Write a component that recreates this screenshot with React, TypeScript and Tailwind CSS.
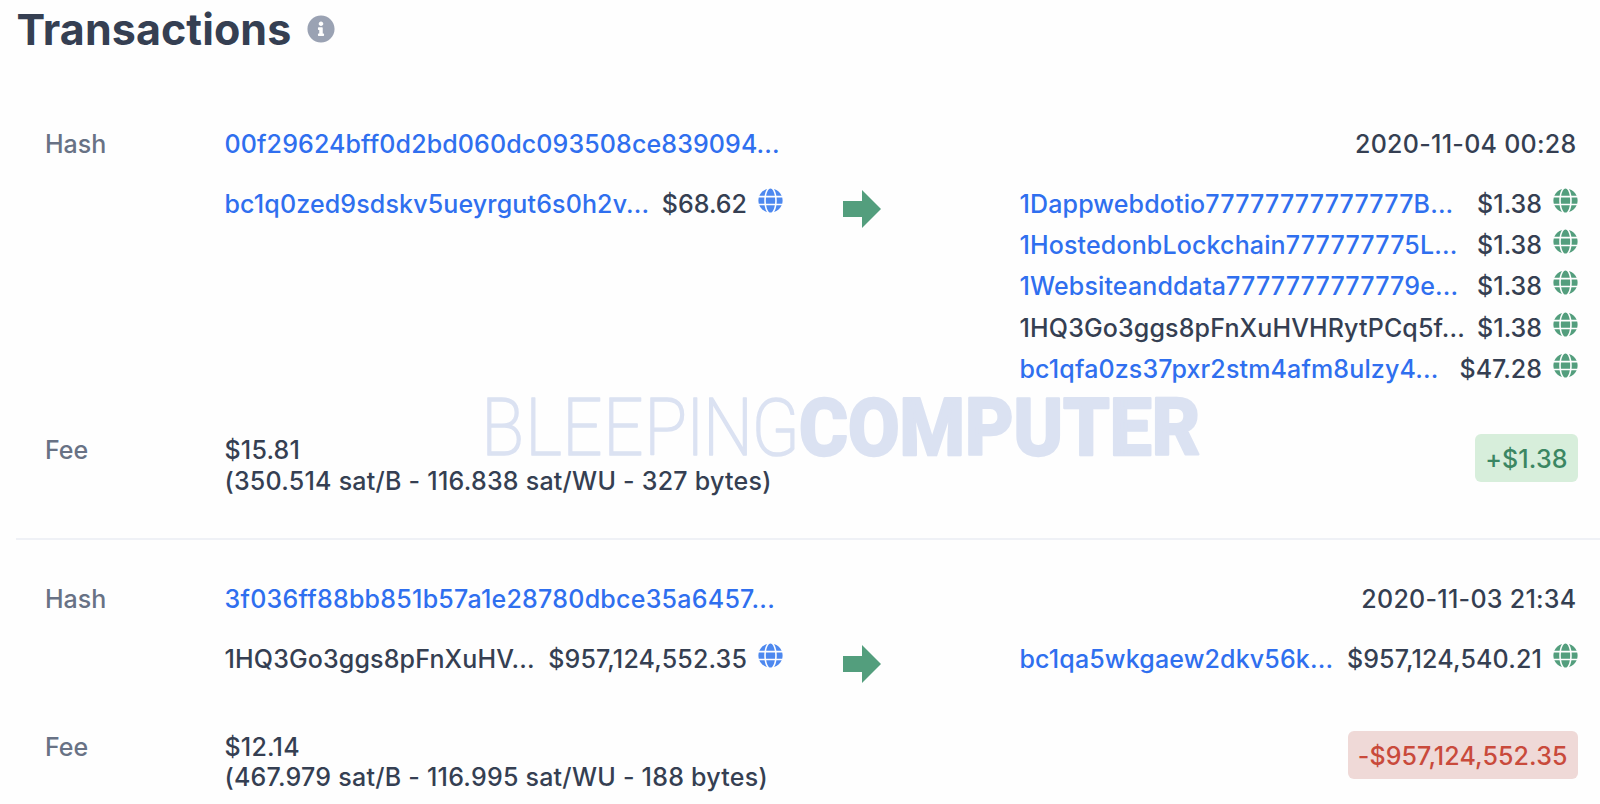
import React from 'react';
import { FaGlobe, FaInfoCircle } from 'react-icons/fa';

interface Entry {
    address: string;
    amount: string;
    link?: boolean;
}

interface Transaction {
    hash: string;
    date: string;
    inputs: Entry[];
    outputs: Entry[];
    fee: string;
    feeDetails: string;
    result: string;
    positive: boolean;
}

const transactions: Transaction[] = [
    {
        hash: '00f29624bff0d2bd060dc093508ce839094...',
        date: '2020-11-04 00:28',
        inputs: [{ address: 'bc1q0zed9sdskv5ueyrgut6s0h2v...', amount: '$68.62', link: true }],
        outputs: [
            { address: '1Dappwebdotio77777777777777B...', amount: '$1.38', link: true },
            { address: '1HostedonbLockchain777777775L...', amount: '$1.38', link: true },
            { address: '1Websiteanddata7777777777779e...', amount: '$1.38', link: true },
            { address: '1HQ3Go3ggs8pFnXuHVHRytPCq5f...', amount: '$1.38' },
            { address: 'bc1qfa0zs37pxr2stm4afm8ulzy4...', amount: '$47.28', link: true },
        ],
        fee: '$15.81',
        feeDetails: '(350.514 sat/B - 116.838 sat/WU - 327 bytes)',
        result: '+$1.38',
        positive: true,
    },
    {
        hash: '3f036ff88bb851b57a1e28780dbce35a6457...',
        date: '2020-11-03 21:34',
        inputs: [{ address: '1HQ3Go3ggs8pFnXuHV...', amount: '$957,124,552.35' }],
        outputs: [{ address: 'bc1qa5wkgaew2dkv56k...', amount: '$957,124,540.21', link: true }],
        fee: '$12.14',
        feeDetails: '(467.979 sat/B - 116.995 sat/WU - 188 bytes)',
        result: '-$957,124,552.35',
        positive: false,
    },
];

const EntryRow: React.FC<{ entry: Entry; iconClass: string }> = ({ entry, iconClass }) => (
    <div className="flex h-[41.3px] items-center whitespace-nowrap">
        <span className={`tracking-[0.14px] ${entry.link ? 'text-[#2f6fef]' : ''}`}>{entry.address}</span>
        <span className={`ml-auto ${entry.amount.length > 6 ? 'tracking-[0.15px]' : ''}`}>{entry.amount}</span>
        <FaGlobe size={25} className={`ml-[10.5px] mb-[9px] shrink-0 ${iconClass}`} />
    </div>
);

const TransactionCard: React.FC<{ tx: Transaction }> = ({ tx }) => (
    <div className="grid grid-cols-[179.5px_558px_237px_558px] pl-[45px]">
        <div className="h-[60px] leading-[41px] text-[#687285]">Hash</div>
        <div className={`leading-[41px] text-[#2f6fef] ${tx.positive ? 'tracking-[0.12px]' : 'tracking-[0.25px]'}`}>
            {tx.hash}
        </div>
        <div />
        <div className="pr-[1px] text-right leading-[41px] tracking-[0.27px]">{tx.date}</div>

        <div />
        <div>
            {tx.inputs.map((entry) => (
                <EntryRow key={entry.address} entry={entry} iconClass="text-[#4d88ef]" />
            ))}
        </div>
        <div className="pl-[60.5px] pt-[6px]">
            <svg width="38" height="38" viewBox="0 0 38 38" fill="#539e7d">
                <path d="M0 11h19V0l19 19-19 19V27H0z" />
            </svg>
        </div>
        <div>
            {tx.outputs.map((entry) => (
                <EntryRow key={entry.address} entry={entry} iconClass="text-[#539e7d]" />
            ))}
        </div>

        <div className={`leading-[30.7px] text-[#687285] ${tx.positive ? 'pt-[45px]' : 'pt-[48.5px]'}`}>Fee</div>
        <div className={`leading-[30.7px] whitespace-nowrap ${tx.positive ? 'pt-[45px]' : 'pt-[48.5px]'}`}>
            <div className="tracking-[0.2px]">{tx.fee}</div>
            <div className="tracking-[0.24px]">{tx.feeDetails}</div>
        </div>
        <div />
        <div className={`text-right ${tx.positive ? 'pt-[44px]' : 'pt-[48px]'}`}>
            <span
                className={`inline-block h-[48px] rounded-md px-[10px] leading-[50px] tracking-[0.1px] ${
                    tx.positive ? 'bg-[#d7eedb] text-[#3b8662]' : 'bg-[#efd9d7] text-[#c94a3b]'
                }`}
            >
                {tx.result}
            </span>
        </div>
    </div>
);

const Watermark: React.FC = () => (
    <svg
        className="pointer-events-none absolute left-[470px] top-[350px]"
        width="760"
        height="140"
        viewBox="470 350 760 140"
        fill="#dbe2f2"
        stroke="#dbe2f2"
        strokeLinejoin="round"
    >
        <text
            transform="scale(0.88 1)"
            x="547 597 639 685.5 732 779.5 799 854"
            y="455.5"
            fontFamily="Roboto"
            fontWeight="200"
            fontSize="80"
            strokeWidth="1.5"
        >
            BLEEPING
        </text>
        <text
            x="799"
            y="455"
            fontFamily="Roboto"
            fontWeight="800"
            fontSize="79"
            strokeWidth="2.5"
            textLength="401"
            lengthAdjust="spacingAndGlyphs"
        >
            COMPUTER
        </text>
    </svg>
);

const App: React.FC = () => (
    <div className="relative h-[804px] w-[1600px] overflow-hidden bg-[#fefefe] font-['Inter',sans-serif] text-[25px] font-medium text-[#353f52]">
        <Watermark />
        <div className="relative flex h-[124px] items-start pl-[16.5px]">
            <h1 className="text-[43px] font-bold leading-[59px] tracking-[0.08px]">Transactions</h1>
            <FaInfoCircle size={28} className="ml-[15.5px] mt-[15px] text-[#9aa2b3]" />
        </div>
        <div className="relative">
            <div className="h-[414px]">
                <TransactionCard tx={transactions[0]} />
            </div>
            <div className="ml-4 h-[2px] bg-[#eff1f6]" />
            <div className="pt-[39px]">
                <TransactionCard tx={transactions[1]} />
            </div>
        </div>
    </div>
);

export default App;
